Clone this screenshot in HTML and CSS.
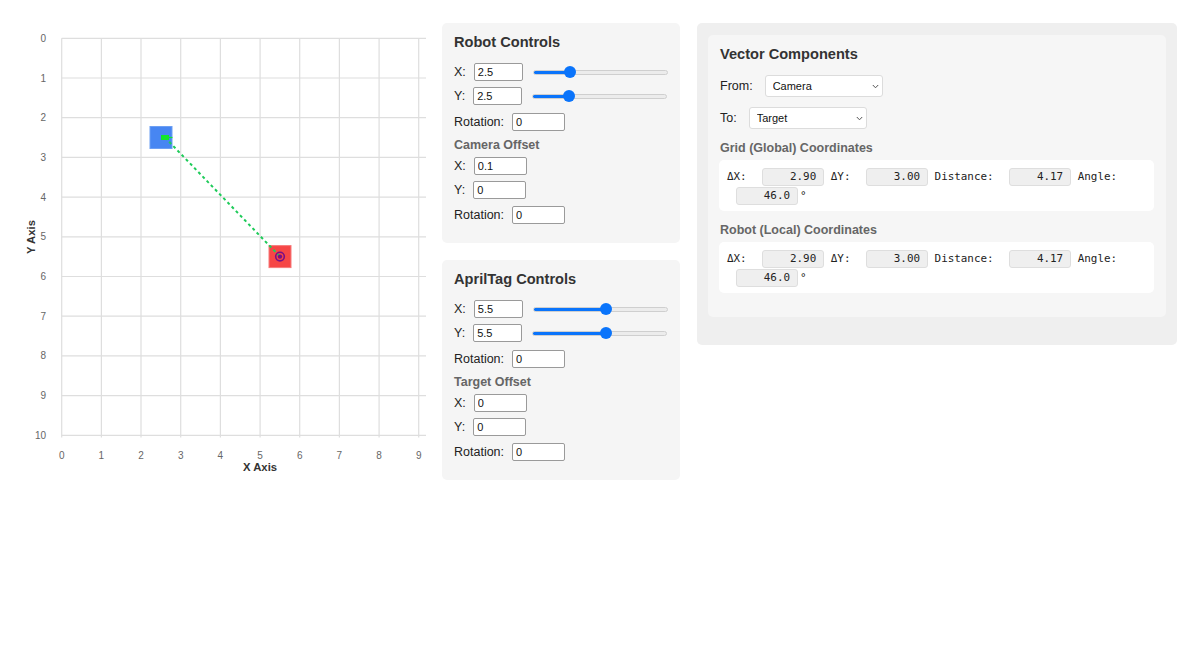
FILE: index.html
```html
<!DOCTYPE html>
<html lang="en">
<head>
<meta charset="utf-8">
<title>Robot Vector Visualizer</title>
<link rel="stylesheet" href="styles.css">
</head>
<body>
<div class="app">
  <svg class="chart" width="432" height="460" viewBox="0 23 432 460" xmlns="http://www.w3.org/2000/svg">
    <g class="grid">
      <line x1="61.7" y1="38.3" x2="61.7" y2="437.5"/>
      <line x1="101.4" y1="38.3" x2="101.4" y2="437.5"/>
      <line x1="141" y1="38.3" x2="141" y2="437.5"/>
      <line x1="180.7" y1="38.3" x2="180.7" y2="437.5"/>
      <line x1="220.4" y1="38.3" x2="220.4" y2="437.5"/>
      <line x1="260.1" y1="38.3" x2="260.1" y2="437.5"/>
      <line x1="299.7" y1="38.3" x2="299.7" y2="437.5"/>
      <line x1="339.4" y1="38.3" x2="339.4" y2="437.5"/>
      <line x1="379.1" y1="38.3" x2="379.1" y2="437.5"/>
      <line x1="418.7" y1="38.3" x2="418.7" y2="437.5"/>
      <line x1="61.7" y1="38.3" x2="426" y2="38.3"/>
      <line x1="61.7" y1="78" x2="426" y2="78"/>
      <line x1="61.7" y1="117.7" x2="426" y2="117.7"/>
      <line x1="61.7" y1="157.4" x2="426" y2="157.4"/>
      <line x1="61.7" y1="197.1" x2="426" y2="197.1"/>
      <line x1="61.7" y1="236.8" x2="426" y2="236.8"/>
      <line x1="61.7" y1="276.5" x2="426" y2="276.5"/>
      <line x1="61.7" y1="316.2" x2="426" y2="316.2"/>
      <line x1="61.7" y1="355.9" x2="426" y2="355.9"/>
      <line x1="61.7" y1="395.6" x2="426" y2="395.6"/>
      <line x1="61.7" y1="435.3" x2="426" y2="435.3"/>
    </g>
    <g class="yticks">
      <text x="46" y="41.8">0</text>
      <text x="46" y="81.5">1</text>
      <text x="46" y="121.2">2</text>
      <text x="46" y="160.9">3</text>
      <text x="46" y="200.6">4</text>
      <text x="46" y="240.3">5</text>
      <text x="46" y="280">6</text>
      <text x="46" y="319.7">7</text>
      <text x="46" y="359.4">8</text>
      <text x="46" y="399.1">9</text>
      <text x="46" y="438.8">10</text>
    </g>
    <g class="xticks">
      <text x="61.7" y="459.3">0</text>
      <text x="101.4" y="459.3">1</text>
      <text x="141" y="459.3">2</text>
      <text x="180.7" y="459.3">3</text>
      <text x="220.4" y="459.3">4</text>
      <text x="260.1" y="459.3">5</text>
      <text x="299.7" y="459.3">6</text>
      <text x="339.4" y="459.3">7</text>
      <text x="379.1" y="459.3">8</text>
      <text x="418.7" y="459.3">9</text>
    </g>
    <text class="axis-title" x="260" y="471" text-anchor="middle">X Axis</text>
    <text class="axis-title" x="31" y="237" text-anchor="middle" dominant-baseline="central" transform="rotate(-90 31 237)">Y Axis</text>

    <rect class="robot" x="150" y="126.5" width="22" height="22"/>
    <rect class="tag" x="269" y="245.6" width="22" height="22"/>
    <line class="vector-line" x1="165" y1="137.5" x2="280" y2="256.6"/>
    <rect class="camera" x="161" y="135" width="8" height="5"/>
    <line class="camera-dir" x1="168" y1="137.5" x2="172.5" y2="137.5"/>
    <circle class="target-ring" cx="280" cy="256.6" r="4.3"/>
    <circle class="target-dot" cx="280" cy="256.6" r="2.2"/>
  </svg>

  <div class="controls">
    <section class="panel">
      <h3>Robot Controls</h3>
      <div class="row"><label>X:</label><input class="num short" type="text" value="2.5"><input class="slider" type="range" min="0" max="10" step="0.1" value="2.5" style="--p:27.2%"></div>
      <div class="row"><label>Y:</label><input class="num short" type="text" value="2.5"><input class="slider" type="range" min="0" max="10" step="0.1" value="2.5" style="--p:27.2%"></div>
      <div class="row gap"><label>Rotation:</label><input class="num" type="text" value="0"></div>
      <h4>Camera Offset</h4>
      <div class="row sub"><label>X:</label><input class="num" type="text" value="0.1"></div>
      <div class="row"><label>Y:</label><input class="num" type="text" value="0"></div>
      <div class="row sub"><label>Rotation:</label><input class="num" type="text" value="0"></div>
    </section>
    <section class="panel">
      <h3>AprilTag Controls</h3>
      <div class="row"><label>X:</label><input class="num short" type="text" value="5.5"><input class="slider" type="range" min="0" max="10" step="0.1" value="5.5" style="--p:54.6%"></div>
      <div class="row"><label>Y:</label><input class="num short" type="text" value="5.5"><input class="slider" type="range" min="0" max="10" step="0.1" value="5.5" style="--p:54.6%"></div>
      <div class="row gap"><label>Rotation:</label><input class="num" type="text" value="0"></div>
      <h4>Target Offset</h4>
      <div class="row sub"><label>X:</label><input class="num" type="text" value="0"></div>
      <div class="row"><label>Y:</label><input class="num" type="text" value="0"></div>
      <div class="row sub"><label>Rotation:</label><input class="num" type="text" value="0"></div>
    </section>
  </div>

  <div class="vector">
    <div class="vector-inner">
      <h3>Vector Components</h3>
      <div class="pick"><label>From:</label>
        <div class="select-wrap">
          <select><option>Camera</option><option>Robot</option></select>
          <svg class="chev" width="7" height="5" viewBox="0 0 7 5"><path d="M0.8 1 L3.5 3.8 L6.2 1" fill="none" stroke="#555" stroke-width="1"/></svg>
        </div>
      </div>
      <div class="pick to"><label>To:</label>
        <div class="select-wrap">
          <select><option>Target</option><option>AprilTag</option></select>
          <svg class="chev" width="7" height="5" viewBox="0 0 7 5"><path d="M0.8 1 L3.5 3.8 L6.2 1" fill="none" stroke="#555" stroke-width="1"/></svg>
        </div>
      </div>
      <h4>Grid (Global) Coordinates</h4>
      <div class="coords">ΔX: <span class="val">2.90</span> ΔY: <span class="val">3.00</span> Distance: <span class="val">4.17</span> Angle: <span class="val">46.0</span><span class="deg">°</span></div>
      <h4>Robot (Local) Coordinates</h4>
      <div class="coords">ΔX: <span class="val">2.90</span> ΔY: <span class="val">3.00</span> Distance: <span class="val">4.17</span> Angle: <span class="val">46.0</span><span class="deg">°</span></div>
    </div>
  </div>
</div>
</body>
</html>
```

FILE: styles.css
```css
* { box-sizing: border-box; }

body {
  margin: 0;
  background: #fff;
  color: #222;
  font-family: "Liberation Sans", Arial, Helvetica, sans-serif;
  font-size: 12.5px;
}

.app {
  display: flex;
  align-items: flex-start;
  padding-top: 23px;
}

/* chart */
.chart { display: block; flex: none; }
.grid line { stroke: #dedede; stroke-width: 1.2; }
.yticks text { font-size: 10px; fill: #666; text-anchor: end; font-family: "Liberation Sans", Arial, sans-serif; }
.xticks text { font-size: 10px; fill: #666; text-anchor: middle; font-family: "Liberation Sans", Arial, sans-serif; }
.axis-title { font-size: 11.3px; font-weight: bold; fill: #333; font-family: "Liberation Sans", Arial, sans-serif; }
.robot { fill: #4786f2; stroke: #6d9ff3; stroke-width: 1; }
.tag { fill: #f64646; stroke: #f77a7a; stroke-width: 1; }
.vector-line { stroke: #1fcb5a; stroke-width: 2; stroke-dasharray: 3 3; }
.camera { fill: #12e62a; }
.camera-dir { stroke: #12e62a; stroke-width: 1.2; }
.target-ring { fill: none; stroke: #7a0f86; stroke-width: 1.6; }
.target-dot { fill: #7a0f86; }

/* control panels */
.controls {
  flex: none;
  width: 238px;
  margin-left: 10px;
  display: flex;
  flex-direction: column;
  gap: 17px;
}

.panel {
  background: #f5f5f5;
  border-radius: 5px;
  padding: 11px 12px 16px;
}

h3 {
  margin: 0 0 9px;
  font-size: 14.6px;
  line-height: 17px;
  font-weight: bold;
  color: #333;
}

h4 {
  margin: 3px 0 0;
  font-size: 12.5px;
  line-height: 16px;
  font-weight: bold;
  color: #666;
}

.row {
  display: flex;
  align-items: center;
  height: 24px;
}
.row.gap { margin-top: 2px; }
.row.sub { margin-top: 1px; }

.row label {
  margin-right: 8px;
  color: #222;
}

.num {
  width: 53px;
  height: 18px;
  padding: 0 3px;
  border: 1px solid #9a9a9a;
  border-radius: 2px;
  background: #fff;
  font-family: "Liberation Sans", Arial, sans-serif;
  font-size: 11px;
  color: #111;
}
.num.short { width: 49px; }

.slider {
  -webkit-appearance: none;
  appearance: none;
  width: 135px;
  height: 5px;
  margin: 0 0 0 10px;
  border: 1px solid #cfcfcf;
  border-radius: 3px;
  background: linear-gradient(to right, #0a74fb var(--p), #ececec var(--p));
}
.slider::-webkit-slider-thumb {
  -webkit-appearance: none;
  appearance: none;
  width: 12px;
  height: 12px;
  border: none;
  border-radius: 50%;
  background: #0a74fb;
}

/* vector components */
.vector {
  flex: none;
  width: 480px;
  margin-left: 17px;
  background: #efefef;
  border-radius: 5px;
  padding: 12px 11px 28px;
}

.vector-inner {
  background: #f6f6f6;
  border-radius: 5px;
  padding: 10px 12px 24px 11px;
}

.vector-inner h3 {
  margin: 0 0 12px;
  line-height: 18px;
  padding-left: 1px;
}

.pick {
  display: flex;
  align-items: center;
  height: 22px;
  padding-left: 1px;
}
.pick.to { margin-top: 10px; }
.pick label { margin-right: 12px; color: #222; }

.select-wrap {
  position: relative;
  width: 118px;
  height: 22px;
}
.select-wrap select {
  -webkit-appearance: none;
  appearance: none;
  width: 100%;
  height: 100%;
  padding: 0 0 0 7px;
  border: 1px solid #dcdcdc;
  border-radius: 3px;
  background: #fff;
  font-family: "Liberation Sans", Arial, sans-serif;
  font-size: 11px;
  color: #111;
}
.chev {
  position: absolute;
  right: 4px;
  top: 9px;
}

.vector-inner h4 {
  margin: 11px 0 4px;
  padding-left: 1px;
}

.coords {
  background: #fff;
  border-radius: 5px;
  padding: 7px 8px 6px;
  font-family: "DejaVu Sans Mono", Menlo, monospace;
  font-size: 10.9px;
  line-height: 19px;
  color: #222;
}

.val {
  display: inline-block;
  width: 62px;
  height: 18px;
  line-height: 16px;
  margin-left: 9px;
  padding: 0 7px 0 4px;
  background: #efefef;
  border: 1px solid #dedede;
  border-radius: 3px;
  text-align: right;
  vertical-align: middle;
}

.deg { margin-left: 2px; }
```
